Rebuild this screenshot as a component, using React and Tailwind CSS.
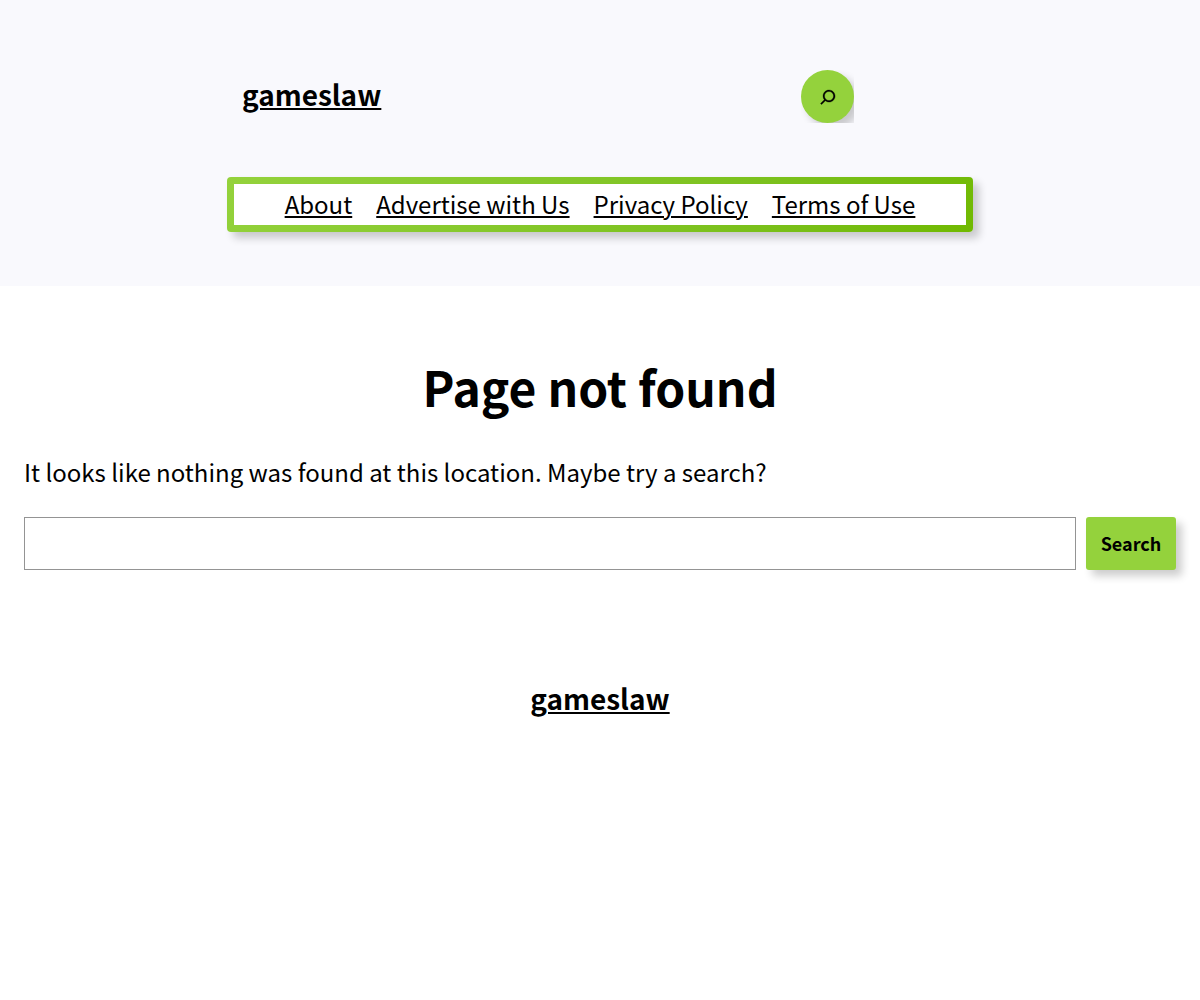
const font = "font-['Noto_Sans_CJK_SC',sans-serif]";

function SiteTitle() {
  return (
    <a href="#" className="block text-[28px] leading-9 font-bold underline decoration-2 underline-offset-2">
      gameslaw
    </a>
  );
}

const links = ["About", "Advertise with Us", "Privacy Policy", "Terms of Use"];

export default function App() {
  return (
    <div className={`${font} text-black bg-white min-h-screen`}>
      <header className="bg-[#f9f9fd] pt-[70px] pb-[54px] px-6">
        <div className="mx-auto flex max-w-[716px] items-start justify-between pr-[104px]">
          <div className="pt-1.5">
            <SiteTitle />
          </div>
          <div className="size-[53px] overflow-hidden">
            <button
              aria-label="Search"
              className="flex size-[53px] items-center justify-center rounded-full bg-[#94d23c] shadow-[6px_6px_9px_rgba(0,0,0,0.2)]"
            >
              <svg viewBox="0 0 24 24" width="24" height="24" stroke="black" strokeWidth="0.3" aria-hidden="true">
                <path d="M13 5c-3.3 0-6 2.7-6 6 0 1.4.5 2.7 1.3 3.7l-3.8 3.8 1.1 1.1 3.8-3.8c1 .8 2.3 1.3 3.7 1.3 3.3 0 6-2.7 6-6S16.3 5 13 5zm0 10.5c-2.5 0-4.5-2-4.5-4.5s2-4.5 4.500-4.500 4.500 2 4.500 4.500-2 4.500-4.500 4.500z" />
              </svg>
            </button>
          </div>
        </div>
        <div className="mx-auto mt-[54px] max-w-[746px] rounded bg-linear-135 from-[#94d23c] to-[#70b900] p-[7px] shadow-[6px_6px_9px_rgba(0,0,0,0.2)]">
          <nav className="flex flex-wrap justify-center gap-x-6 bg-white pb-0.5 text-2xl leading-[39px]">
            {links.map((l) => (
              <a key={l} href="#" className="underline decoration-2 underline-offset-2">{l}</a>
            ))}
          </nav>
        </div>
      </header>
      <main className="px-6 pt-[70px]">
        <h1 className="text-center text-5xl leading-[60px] font-bold">Page not found</h1>
        <p className="mt-[38px] text-2xl leading-9">
          It looks like nothing was found at this location. Maybe try a search?
        </p>
        <form className="mt-[27px] flex gap-[10px]" onSubmit={(e) => e.preventDefault()}>
          <input type="search" aria-label="Search" className="h-[53px] min-w-0 flex-1 border border-[#949494] px-2" />
          <button className="h-[53px] w-[90px] rounded-[3px] bg-[#94d23c] pb-0.5 text-center text-lg font-bold shadow-[6px_6px_9px_rgba(0,0,0,0.2)]">
            Search
          </button>
        </form>
      </main>
      <footer className="flex justify-center pt-[110px]">
        <SiteTitle />
      </footer>
    </div>
  );
}
